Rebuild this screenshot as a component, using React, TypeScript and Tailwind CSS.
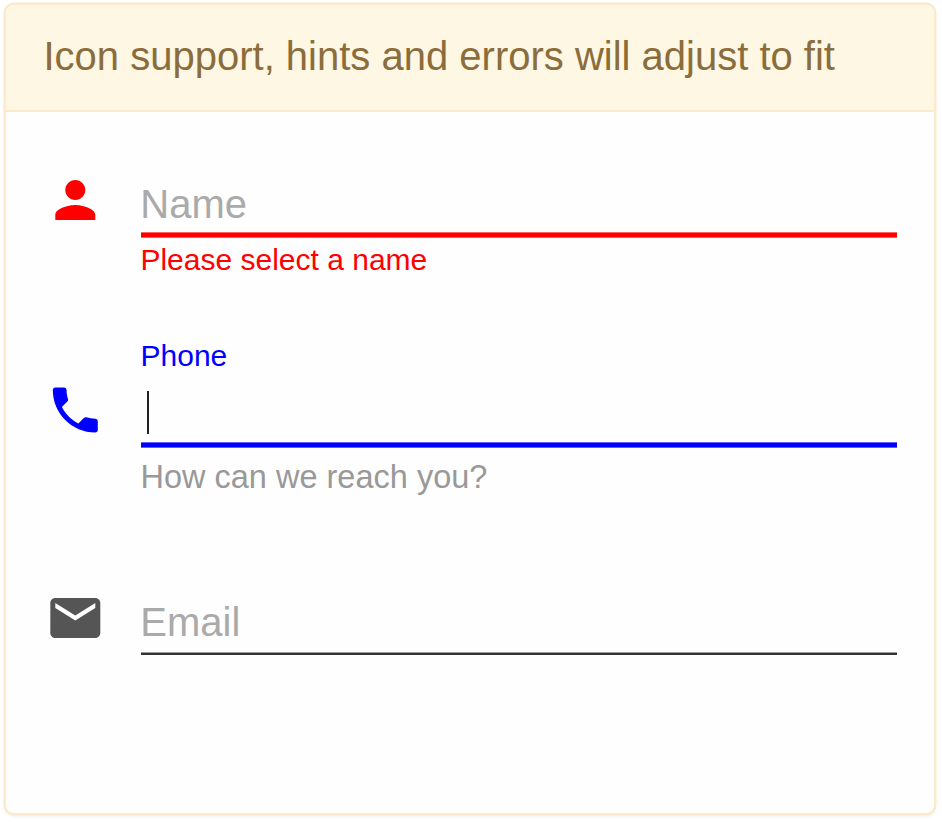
import type { ReactNode } from "react";

function Icon({ path, className }: { path: string; className: string }) {
  return (
    <svg viewBox="-0.12 0 24 24" className={`h-[60px] w-[60px] shrink-0 fill-current ${className}`}>
      <path d={path} />
    </svg>
  );
}

function Row({ className, icon, children }: { className: string; icon: ReactNode; children: ReactNode }) {
  return (
    <div className={`flex items-start gap-9 ${className}`}>
      {icon}
      <div className="flex min-w-0 flex-1 flex-col">{children}</div>
    </div>
  );
}

export default function App() {
  return (
    <div className="h-[822px] w-[942px] bg-white pt-[3px] pl-[4px] font-['Liberation_Sans',Arial,sans-serif]">
      <div className="flex h-[812px] w-[932px] flex-col overflow-hidden rounded-[10px] border-[2px] border-[#fbeacb] bg-[#fefefe] shadow-[0_0_0_0.5px_#fbeacb,0_2px_3px_rgba(0,0,0,0.05)]">
        <header className="h-[107px] shrink-0 border-b-[2px] border-[#fbeacb] bg-[#fdf7e3] pt-[27px] pl-[37.5px]">
          <h1 className="text-[40px] leading-[48px] whitespace-nowrap text-[#8b6d3c]">
            Icon support, hints and errors will adjust to fit
          </h1>
        </header>
        <main className="flex flex-col pr-[37px] pl-[39px]">
          <Row
            className="h-[210px] pt-[58px]"
            icon={
              <Icon
                className="text-[#ff0000]"
                path="M12 12c2.21 0 4-1.79 4-4s-1.79-4-4-4-4 1.79-4 4 1.79 4 4 4zm0 2c-2.67 0-8 1.34-8 4v2h16v-2c0-2.66-5.33-4-8-4z"
              />
            }
          >
            <label className="-ml-[0.7px] mt-[10px] h-[52px] text-[40px] leading-[48px] text-[#aaaaaa]">Name</label>
            <div className="h-[6px] border-y border-[#ff6060] bg-[#ff0000]" />
            <p className="-ml-[0.6px] mt-[4px] text-[30px] leading-[36px] text-[#ff0000]">Please select a name</p>
          </Row>
          <Row
            className="h-[208px]"
            icon={
              <Icon
                className="mt-[58px] text-[#0000ff]"
                path="M6.62 10.79c1.44 2.83 3.76 5.14 6.59 6.59l2.2-2.2c.27-.27.67-.36 1.02-.24 1.12.37 2.33.57 3.57.57.55 0 1 .45 1 1V20c0 .55-.45 1-1 1-9.39 0-17-7.61-17-17 0-.55.45-1 1-1h3.5c.55 0 1 .45 1 1 0 1.25.2 2.45.57 3.57.11.35.03.74-.25 1.02l-2.2 2.2z"
              />
            }
          >
            <label className="-ml-[0.5px] mt-[16px] h-[53px] text-[30px] leading-[36px] text-[#0000ff]">Phone</label>
            <div className="flex h-[51px] pl-[6px]">
              <span className="h-[43px] w-[2px] bg-[#222222]" />
            </div>
            <div className="h-[6px] border-y border-[#6060ff] bg-[#0000ff]" />
            <p className="-ml-[0.5px] mt-[9px] text-[32.5px] leading-[40px] text-[#999999]">How can we reach you?</p>
          </Row>
          <Row
            className="pt-[58px]"
            icon={
              <Icon
                className="text-[#555555]"
                path="M20 4H4c-1.1 0-1.99.9-1.99 2L2 18c0 1.1.9 2 2 2h16c1.1 0 2-.9 2-2V6c0-1.1-.9-2-2-2zm0 4l-8 5-8-5V6l8 5 8-5v2z"
              />
            }
          >
            <label className="-ml-[0.7px] mt-[10px] h-[54px] text-[40px] leading-[48px] text-[#aaaaaa]">Email</label>
            <div className="h-[3px] border-t border-[#999999] bg-[#333333]" />
          </Row>
        </main>
      </div>
    </div>
  );
}
